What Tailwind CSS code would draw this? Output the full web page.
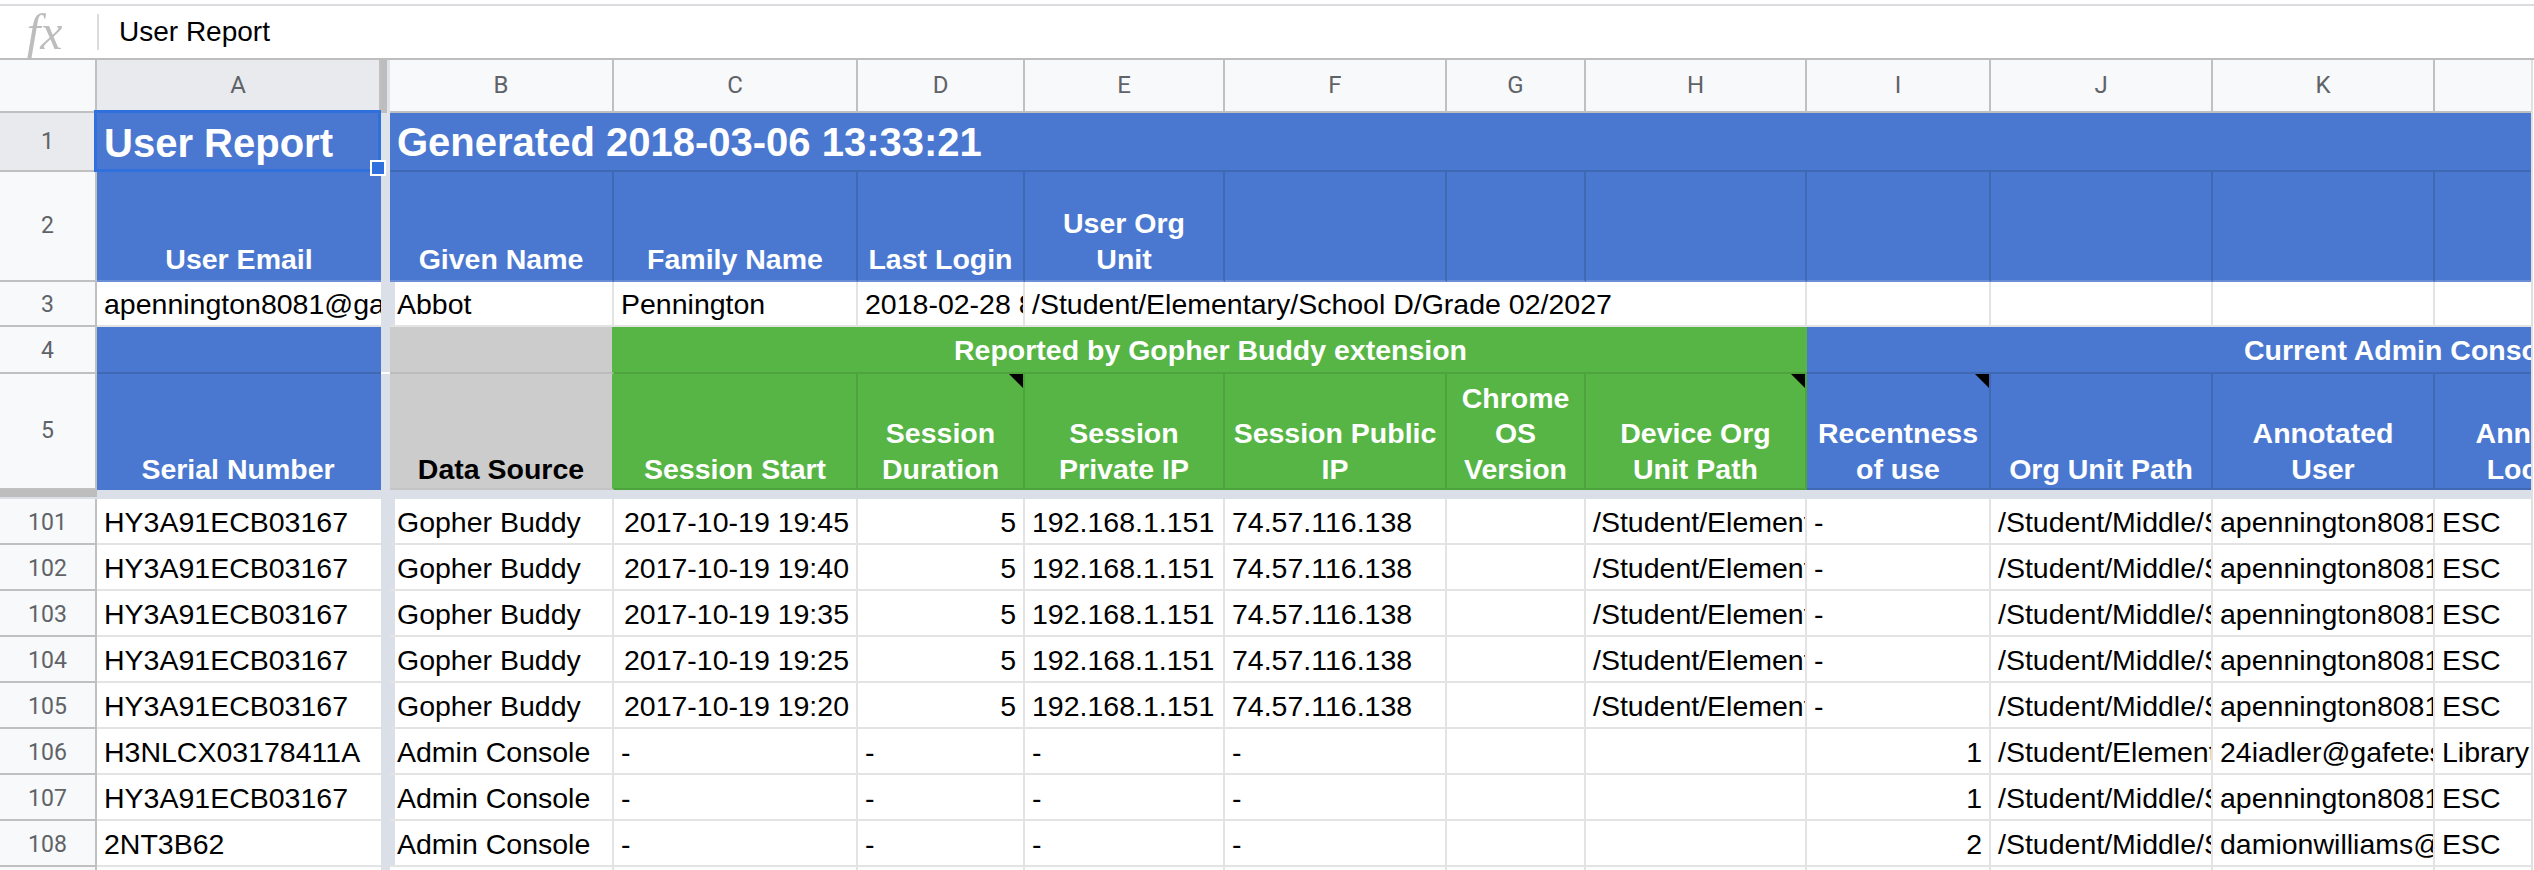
<!DOCTYPE html>
<html>
<head>
<meta charset="utf-8">
<title>User Report</title>
<script src="https://cdn.jsdelivr.net/npm/@tailwindcss/browser@4"></script>
</head>
<body class="bg-white">
<div class="w-[2534px] h-[870px] overflow-hidden bg-white text-black text-[28.5px] leading-[35.5px] font-['Liberation_Sans',sans-serif]">
  <!-- formula bar -->
  <div class="h-[6px] border-b-2 border-[#dadce0]"></div>
  <div class="h-[52px] flex items-center">
    <div class="w-[97px] flex justify-center pr-[8px]"><span class="italic text-[50px] leading-[50px] text-[#bdbdbd] font-['Liberation_Serif',serif]">fx</span></div>
    <div class="w-[2px] h-[36px] bg-[#dadce0]"></div>
    <div class="pl-[20px] text-[28px]">User Report</div>
  </div>
  <div class="flex border-t-2 border-[#bdbdbd]">
    <div class="w-[2531px] grid grid-cols-[97px_284px_9px_224px_244px_167px_200px_222px_139px_221px_184px_222px_222px_96px]">

      <!-- column letters -->
      <div class="grid grid-cols-subgrid col-span-full h-[53px] text-[24px] text-[#5f6368] font-['Roboto',sans-serif] *:flex *:items-center *:justify-center *:bg-[#f8f9fa] *:border-r-2 *:border-b-2 *:border-[#c0c0c0] *:last:border-r-0">
        <div></div>
        <div class="bg-[#e8eaed]!">A</div>
        <div class="bg-[#dfe3ea]! border-0! justify-start!"><div class="w-[6px] h-full bg-[#bdbdbd]"></div></div>
        <div>B</div><div>C</div><div>D</div><div>E</div><div>F</div><div>G</div><div>H</div><div>I</div><div>J</div><div>K</div><div></div>
      </div>

      <!-- row 1 -->
      <div class="grid grid-cols-subgrid col-span-full h-[59px] text-[40px] font-bold text-white">
        <div class="flex items-center justify-center bg-[#e8eaed] border-r-2 border-b-2 border-[#c0c0c0] text-[23px] font-normal text-[#5f6368] font-['Roboto',sans-serif]">1</div>
        <div class="relative flex items-center px-[7px] pt-[3px] bg-[#4a78d0]">User Report
          <div class="absolute -left-[3px] -top-[3px] w-[287px] h-[62px] border-[3px] border-[#2f6fde]"></div>
          <div class="absolute left-[273px] top-[47px] w-[16px] h-[16px] bg-white p-[2px]"><div class="w-full h-full bg-[#2f6fde]"></div></div>
        </div>
        <div class="bg-[#dfe3ea]"></div>
        <div class="col-span-11 flex items-center pl-[7px] pt-[3px] bg-[#4a78d0] border-b-2 border-[#4069b5]">Generated 2018-03-06 13:33:21</div>
      </div>

      <!-- row 2 -->
      <div class="grid grid-cols-subgrid col-span-full h-[110px] font-bold text-white *:flex *:items-end *:justify-center *:text-center *:pb-[3px] *:bg-[#4a78d0] *:border-r-2 *:border-b-2 *:border-[#4069b5] *:border-b-[#6a8fd8] *:last:border-r-0">
        <div class="bg-[#f8f9fa]! border-[#c0c0c0]! items-center! pb-0! text-[23px] font-normal text-[#5f6368] font-['Roboto',sans-serif]">2</div>
        <div class="border-r-0!">User Email</div>
        <div class="bg-[#dadfe8]! border-0!"></div>
        <div>Given Name</div><div>Family Name</div><div>Last Login</div><div>User Org<br>Unit</div>
        <div></div><div></div><div></div><div></div><div></div><div></div><div></div>
      </div>

      <!-- row 3 -->
      <div class="grid grid-cols-subgrid col-span-full h-[45px] *:flex *:items-center *:px-[7px] *:pt-[3px] *:overflow-hidden *:whitespace-nowrap *:border-r-2 *:border-b-2 *:border-[#e3e3e3] *:last:border-r-0">
        <div class="justify-center bg-[#f8f9fa] border-[#c0c0c0]! text-[23px] text-[#5f6368] font-['Roboto',sans-serif]">3</div>
        <div class="border-r-0!">apennington8081@gafetest.com</div>
        <div class="bg-[#dadfe8] border-0!"></div>
        <div>Abbot</div><div>Pennington</div><div>2018-02-28 8:03</div>
        <div class="col-span-4">/Student/Elementary/School D/Grade 02/2027</div>
        <div></div><div></div><div></div><div></div>
      </div>

      <!-- row 4 -->
      <div class="grid grid-cols-subgrid col-span-full h-[47px] font-bold text-white *:flex *:items-center *:pt-[2px] *:overflow-hidden *:whitespace-nowrap *:border-b-2">
        <div class="justify-center bg-[#f8f9fa] border-r-2 border-[#c0c0c0] text-[23px] font-normal text-[#5f6368] font-['Roboto',sans-serif]">4</div>
        <div class="bg-[#4a78d0] border-[#4069b5]"></div>
        <div class="bg-[#dadfe8] border-0"></div>
        <div class="bg-[#cccccc] border-[#bcbcbc] border-r-2 border-r-[#56b544]"></div>
        <div class="col-span-6 justify-center bg-[#56b544] border-[#4da33c]">Reported by Gopher Buddy extension</div>
        <div class="col-span-4 pl-[437px] bg-[#4a78d0] border-[#4069b5]">Current Admin Console Data</div>
      </div>

      <!-- row 5 -->
      <div class="grid grid-cols-subgrid col-span-full h-[116px] font-bold text-white *:relative *:flex *:items-end *:justify-center *:text-center *:pb-[1px] *:overflow-hidden *:border-r-2 *:border-b-2 *:last:border-r-0">
        <div class="items-center! pb-0! bg-[#f8f9fa] border-[#c0c0c0] text-[23px] font-normal text-[#5f6368] font-['Roboto',sans-serif]">5</div>
        <div class="bg-[#4a78d0] border-[#4a78d0]">Serial Number</div>
        <div class="bg-[#dadfe8] border-0!"></div>
        <div class="bg-[#cccccc] border-[#c4c4c4] border-r-[#56b544] text-black">Data Source</div>
        <div class="bg-[#56b544] border-[#4da33c]">Session Start</div>
        <div class="bg-[#56b544] border-[#4da33c]">Session<br>Duration<svg class="absolute top-0 right-0" width="14" height="14" viewBox="0 0 14 14"><path d="M0 0H14V14Z" fill="#000"/></svg></div>
        <div class="bg-[#56b544] border-[#4da33c]">Session<br>Private IP</div>
        <div class="bg-[#56b544] border-[#4da33c]">Session Public<br>IP</div>
        <div class="bg-[#56b544] border-[#4da33c]">Chrome<br>OS<br>Version</div>
        <div class="bg-[#56b544] border-[#4da33c]">Device Org<br>Unit Path<svg class="absolute top-0 right-0" width="14" height="14" viewBox="0 0 14 14"><path d="M0 0H14V14Z" fill="#000"/></svg></div>
        <div class="bg-[#4a78d0] border-[#4069b5]">Recentness<br>of use<svg class="absolute top-0 right-0" width="14" height="14" viewBox="0 0 14 14"><path d="M0 0H14V14Z" fill="#000"/></svg></div>
        <div class="bg-[#4a78d0] border-[#4069b5]">Org Unit Path</div>
        <div class="bg-[#4a78d0] border-[#4069b5]">Annotated<br>User</div>
        <div class="bg-[#4a78d0] border-[#4069b5] justify-start!"><div class="w-[222px] shrink-0">Annotated<br>Location</div></div>
      </div>

      <!-- frozen row divider -->
      <div class="grid grid-cols-subgrid col-span-full h-[9px]">
        <div class="flex flex-col"><div class="h-[7px] bg-[#bdbdbd]"></div><div class="h-[2px] bg-[#dadfe8]"></div></div>
        <div class="col-span-13 bg-[#dadfe8]"></div>
      </div>

      <!-- row 101 -->
      <div class="grid grid-cols-subgrid col-span-full h-[46px] *:flex *:items-center *:px-[7px] *:pt-[3px] *:overflow-hidden *:whitespace-nowrap *:border-r-2 *:border-b-2 *:border-[#e3e3e3] *:last:border-r-0">
        <div class="justify-center bg-[#f8f9fa] border-[#c0c0c0]! text-[23px] text-[#5f6368] font-['Roboto',sans-serif]">101</div>
        <div class="border-r-0!">HY3A91ECB03167</div><div class="bg-[#dadfe8] border-0!"></div>
        <div>Gopher Buddy</div><div class="justify-end">2017-10-19 19:45</div><div class="justify-end">5</div><div>192.168.1.151</div><div>74.57.116.138</div><div></div><div>/Student/Elementary/School D</div><div>-</div><div>/Student/Middle/School A</div><div>apennington8081@gafetest.com</div><div>ESC</div>
      </div>
      <!-- row 102 -->
      <div class="grid grid-cols-subgrid col-span-full h-[46px] *:flex *:items-center *:px-[7px] *:pt-[3px] *:overflow-hidden *:whitespace-nowrap *:border-r-2 *:border-b-2 *:border-[#e3e3e3] *:last:border-r-0">
        <div class="justify-center bg-[#f8f9fa] border-[#c0c0c0]! text-[23px] text-[#5f6368] font-['Roboto',sans-serif]">102</div>
        <div class="border-r-0!">HY3A91ECB03167</div><div class="bg-[#dadfe8] border-0!"></div>
        <div>Gopher Buddy</div><div class="justify-end">2017-10-19 19:40</div><div class="justify-end">5</div><div>192.168.1.151</div><div>74.57.116.138</div><div></div><div>/Student/Elementary/School D</div><div>-</div><div>/Student/Middle/School A</div><div>apennington8081@gafetest.com</div><div>ESC</div>
      </div>
      <!-- row 103 -->
      <div class="grid grid-cols-subgrid col-span-full h-[46px] *:flex *:items-center *:px-[7px] *:pt-[3px] *:overflow-hidden *:whitespace-nowrap *:border-r-2 *:border-b-2 *:border-[#e3e3e3] *:last:border-r-0">
        <div class="justify-center bg-[#f8f9fa] border-[#c0c0c0]! text-[23px] text-[#5f6368] font-['Roboto',sans-serif]">103</div>
        <div class="border-r-0!">HY3A91ECB03167</div><div class="bg-[#dadfe8] border-0!"></div>
        <div>Gopher Buddy</div><div class="justify-end">2017-10-19 19:35</div><div class="justify-end">5</div><div>192.168.1.151</div><div>74.57.116.138</div><div></div><div>/Student/Elementary/School D</div><div>-</div><div>/Student/Middle/School A</div><div>apennington8081@gafetest.com</div><div>ESC</div>
      </div>
      <!-- row 104 -->
      <div class="grid grid-cols-subgrid col-span-full h-[46px] *:flex *:items-center *:px-[7px] *:pt-[3px] *:overflow-hidden *:whitespace-nowrap *:border-r-2 *:border-b-2 *:border-[#e3e3e3] *:last:border-r-0">
        <div class="justify-center bg-[#f8f9fa] border-[#c0c0c0]! text-[23px] text-[#5f6368] font-['Roboto',sans-serif]">104</div>
        <div class="border-r-0!">HY3A91ECB03167</div><div class="bg-[#dadfe8] border-0!"></div>
        <div>Gopher Buddy</div><div class="justify-end">2017-10-19 19:25</div><div class="justify-end">5</div><div>192.168.1.151</div><div>74.57.116.138</div><div></div><div>/Student/Elementary/School D</div><div>-</div><div>/Student/Middle/School A</div><div>apennington8081@gafetest.com</div><div>ESC</div>
      </div>
      <!-- row 105 -->
      <div class="grid grid-cols-subgrid col-span-full h-[46px] *:flex *:items-center *:px-[7px] *:pt-[3px] *:overflow-hidden *:whitespace-nowrap *:border-r-2 *:border-b-2 *:border-[#e3e3e3] *:last:border-r-0">
        <div class="justify-center bg-[#f8f9fa] border-[#c0c0c0]! text-[23px] text-[#5f6368] font-['Roboto',sans-serif]">105</div>
        <div class="border-r-0!">HY3A91ECB03167</div><div class="bg-[#dadfe8] border-0!"></div>
        <div>Gopher Buddy</div><div class="justify-end">2017-10-19 19:20</div><div class="justify-end">5</div><div>192.168.1.151</div><div>74.57.116.138</div><div></div><div>/Student/Elementary/School D</div><div>-</div><div>/Student/Middle/School A</div><div>apennington8081@gafetest.com</div><div>ESC</div>
      </div>
      <!-- row 106 -->
      <div class="grid grid-cols-subgrid col-span-full h-[46px] *:flex *:items-center *:px-[7px] *:pt-[3px] *:overflow-hidden *:whitespace-nowrap *:border-r-2 *:border-b-2 *:border-[#e3e3e3] *:last:border-r-0">
        <div class="justify-center bg-[#f8f9fa] border-[#c0c0c0]! text-[23px] text-[#5f6368] font-['Roboto',sans-serif]">106</div>
        <div class="border-r-0!">H3NLCX03178411A</div><div class="bg-[#dadfe8] border-0!"></div>
        <div>Admin Console</div><div>-</div><div>-</div><div>-</div><div>-</div><div></div><div></div><div class="justify-end">1</div><div>/Student/Elementary/School D</div><div>24iadler@gafetest.com</div><div>Library</div>
      </div>
      <!-- row 107 -->
      <div class="grid grid-cols-subgrid col-span-full h-[46px] *:flex *:items-center *:px-[7px] *:pt-[3px] *:overflow-hidden *:whitespace-nowrap *:border-r-2 *:border-b-2 *:border-[#e3e3e3] *:last:border-r-0">
        <div class="justify-center bg-[#f8f9fa] border-[#c0c0c0]! text-[23px] text-[#5f6368] font-['Roboto',sans-serif]">107</div>
        <div class="border-r-0!">HY3A91ECB03167</div><div class="bg-[#dadfe8] border-0!"></div>
        <div>Admin Console</div><div>-</div><div>-</div><div>-</div><div>-</div><div></div><div></div><div class="justify-end">1</div><div>/Student/Middle/School A</div><div>apennington8081@gafetest.com</div><div>ESC</div>
      </div>
      <!-- row 108 -->
      <div class="grid grid-cols-subgrid col-span-full h-[46px] *:flex *:items-center *:px-[7px] *:pt-[3px] *:overflow-hidden *:whitespace-nowrap *:border-r-2 *:border-b-2 *:border-[#e3e3e3] *:last:border-r-0">
        <div class="justify-center bg-[#f8f9fa] border-[#c0c0c0]! text-[23px] text-[#5f6368] font-['Roboto',sans-serif]">108</div>
        <div class="border-r-0!">2NT3B62</div><div class="bg-[#dadfe8] border-0!"></div>
        <div>Admin Console</div><div>-</div><div>-</div><div>-</div><div>-</div><div></div><div></div><div class="justify-end">2</div><div>/Student/Middle/School A</div><div>damionwilliams@gafetest.com</div><div>ESC</div>
      </div>
      <!-- next partial row -->
      <div class="grid grid-cols-subgrid col-span-full h-[3px] *:border-r-2 *:border-[#e3e3e3] *:last:border-r-0">
        <div class="bg-[#f8f9fa] border-[#c0c0c0]!"></div><div class="border-r-0!"></div><div class="bg-[#dadfe8] border-0!"></div>
        <div></div><div></div><div></div><div></div><div></div><div></div><div></div><div></div><div></div><div></div><div></div>
      </div>
    </div>
    <div class="w-[3px] border-l-2 border-[#e0e0e0] bg-white"></div>
  </div>
</div>
</body>
</html>
